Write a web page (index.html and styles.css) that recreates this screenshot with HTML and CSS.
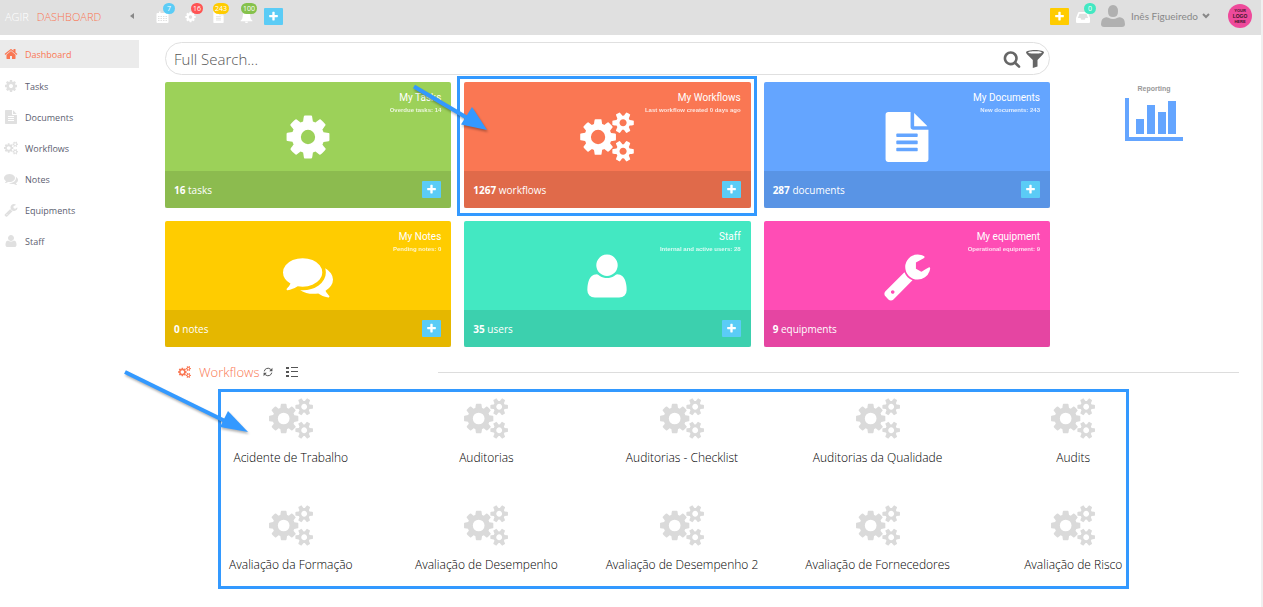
FILE: index.html
```
<!DOCTYPE html>
<html lang="en"><head>
<meta charset="utf-8">
<meta name="viewport" content="width=device-width, initial-scale=1.0">
<title>AGIR Dashboard</title>
<link rel="stylesheet" href="styles.css">
</head>
<body>
<svg class="sprite" aria-hidden="true">
  <symbol id="i-cog" viewBox="0 0 1792 1792"><path d="M1152 896q0-106-75-181t-181-75-181 75-75 181 75 181 181 75 181-75 75-181zm512-109v222q0 12-8 23t-20 13l-185 28q-19 54-39 91 35 50 107 138 10 12 10 25t-9 23q-27 37-99 108t-94 71q-12 0-26-9l-138-108q-44 23-91 38-16 136-29 186-7 28-36 28h-222q-14 0-24.500-8.500t-11.500-21.500l-28-184q-49-16-90-37l-141 107q-10 9-25 9-14 0-25-11-126-114-165-168-7-10-7-23 0-12 8-23 15-21 51-66.500t54-70.500q-27-50-41-99l-183-27q-13-2-21-12.500t-8-23.500v-222q0-12 8-23t19-13l186-28q14-46 39-92-40-57-107-138-10-12-10-24 0-10 9-23 26-36 98.500-107.500t94.500-71.500q13 0 26 10l138 107q44-23 91-38 16-136 29-186 7-28 36-28h222q14 0 24.500 8.500t11.500 21.500l28 184q49 16 90 37l142-107q9-9 24-9 13 0 25 10 129 119 165 170 7 8 7 22 0 12-8 23-15 21-51 66.500t-54 70.500q26 50 41 98l183 28q13 2 21 12.500t8 23.500z"/></symbol>
  <symbol id="i-cogs" viewBox="-64 0 1920 1792"><path d="M832 896q0-106-75-181t-181-75-181 75-75 181 75 181 181 75 181-75 75-181zm768 512q0-52-38-90t-90-38-90 38-38 90q0 53 37.500 90.500t90.500 37.500 90.500-37.500 37.500-90.500zm0-1024q0-52-38-90t-90-38-90 38-38 90q0 53 37.500 90.500t90.500 37.500 90.500-37.500 37.500-90.500zm-384 421v185q0 10-7 19.500t-16 10.500l-155 24q-11 35-32 76 34 48 90 115 7 11 7 20 0 12-7 19-23 30-82.500 89.500t-78.500 59.500q-11 0-21-7l-115-90q-37 19-77 31-11 108-23 155-7 24-30 24h-186q-11 0-20-7.500t-10-17.500l-23-153q-34-10-75-31l-118 89q-7 7-20 7-11 0-21-8-144-133-144-160 0-9 7-19 10-14 41-53t47-61q-23-44-35-82l-152-24q-10-1-17-9.500t-7-19.500v-185q0-10 7-19.500t16-10.500l155-24q11-35 32-76-34-48-90-115-7-11-7-20 0-12 7-20 22-30 82-89t79-59q11 0 21 7l115 90q34-18 77-32 11-108 23-154 7-24 30-24h186q11 0 20 7.500t10 17.500l23 153q34 10 75 31l118-89q8-7 20-7 11 0 21 8 144 133 144 160 0 8-7 19-12 16-42 54t-45 60q23 48 34 82l152 23q10 2 17 10.500t7 19.500zm640 533v140q0 16-149 31-12 27-30 52 51 113 51 138 0 4-4 7-122 71-124 71-8 0-46-47t-52-68q-20 2-30 2t-30-2q-14 21-52 68t-46 47q-2 0-124-71-4-3-4-7 0-25 51-138-18-25-30-52-149-15-149-31v-140q0-16 149-31 13-29 30-52-51-113-51-138 0-4 4-7 4-2 35-20t59-34 30-16q8 0 46 46.500t52 67.500q20-2 30-2t30 2q51-71 92-112l6-2q4 0 124 70 4 3 4 7 0 25-51 138 17 23 30 52 149 15 149 31zm0-1024v140q0 16-149 31-12 27-30 52 51 113 51 138 0 4-4 7-122 71-124 71-8 0-46-47t-52-68q-20 2-30 2t-30-2q-14 21-52 68t-46 47q-2 0-124-71-4-3-4-7 0-25 51-138-18-25-30-52-149-15-149-31v-140q0-16 149-31 13-29 30-52-51-113-51-138 0-4 4-7 4-2 35-20t59-34 30-16q8 0 46 46.500t52 67.500q20-2 30-2t30 2q51-71 92-112l6-2q4 0 124 70 4 3 4 7 0 25-51 138 17 23 30 52 149 15 149 31z"/></symbol>
  <symbol id="i-file" viewBox="0 0 1792 1792"><path d="M1596 476q14 14 28 36h-472v-472q22 14 36 28zm-476 164h544v1056q0 40-28 68t-68 28h-1344q-40 0-68-28t-28-68v-1600q0-40 28-68t68-28h800v544q0 40 28 68t68 28zm160 736v-64q0-14-9-23t-23-9h-704q-14 0-23 9t-9 23v64q0 14 9 23t23 9h704q14 0 23-9t9-23zm0-256v-64q0-14-9-23t-23-9h-704q-14 0-23 9t-9 23v64q0 14 9 23t23 9h704q14 0 23-9t9-23zm0-256v-64q0-14-9-23t-23-9h-704q-14 0-23 9t-9 23v64q0 14 9 23t23 9h704q14 0 23-9t9-23z"/></symbol>
  <symbol id="i-comments" viewBox="0 0 1792 1792"><path d="M1408 768q0 139-94 257t-256.500 186.500-353.500 68.500q-86 0-176-16-124 88-278 128-36 9-86 16h-3q-11 0-20.500-8t-11.500-21q-1-3-1-6.500t.5-6.500 2-6l2.500-5 3.500-5.500 4-5 4.500-5 4-4.500q5-6 23-25t26-29.500 22.500-29 25-38.500 20.500-44q-124-72-195-177t-71-224q0-139 94-257t256.500-186.500 353.500-68.500 353.500 68.500 256.500 186.500 94 257zm384 256q0 120-71 224.500t-195 176.500q10 24 20.500 44t25 38.500 22.500 29 26 29.500 23 25q1 1 4 4.500t4.500 5 4 5 3.500 5.500l2.500 5 2 6 .5 6.500-1 6.500q-3 14-13 22t-22 7q-50-7-86-16-154-40-278-128-90 16-176 16-271 0-472-132 58 4 88 4 161 0 309-45t264-129q125-92 192-212t67-254q0-77-23-152 129 71 204 178t75 230z"/></symbol>
  <symbol id="i-user" viewBox="0 0 1792 1792"><path d="M1600 1405q0 120-73 189.500t-194 69.500h-874q-121 0-194-69.500t-73-189.500q0-53 3.500-103.500t14-109 26.500-108.500 43-97.500 62-81 85.500-53.500 111.500-20q9 0 42 21.500t74.500 48 108 48 133.500 21.500 133.500-21.500 108-48 74.500-48 42-21.500q61 0 111.500 20t85.500 53.500 62 81 43 97.500 26.500 108.500 14 109 3.500 103.500zm-320-893q0 159-112.500 271.500t-271.500 112.500-271.500-112.500-112.500-271.500 112.500-271.500 271.500-112.500 271.500 112.500 112.500 271.500z"/></symbol>
  <symbol id="i-wrench" viewBox="0 0 1792 1792"><path d="M448 1472q0-26-19-45t-45-19-45 19-19 45 19 45 45 19 45-19 19-45zm644-420l-682 682q-37 37-90 37-52 0-91-37l-106-108q-38-36-38-90 0-53 38-91l681-681q39 98 114.500 173.500t173.500 114.500zm634-435q0 39-23 106-47 134-164.500 217.500t-258.500 83.500q-185 0-316.500-131.500t-131.500-316.500 131.500-316.500 316.500-131.500q58 0 121.500 16.500t107.500 46.500q16 11 16 28t-16 28l-293 169v224l193 107q5-3 79-48.500t135.500-81 70.500-35.500q15 0 23.500 10t8.500 25z"/></symbol>
  <symbol id="i-home" viewBox="0 0 1792 1792"><path d="M1472 992v480q0 26-19 45t-45 19h-384v-384h-256v384h-384q-26 0-45-19t-19-45v-480q0-1 .5-3t.5-3l575-474 575 474q1 2 1 6zm223-69l-62 74q-8 9-21 11h-3q-13 0-21-7l-692-577-692 577q-12 8-24 7-13-2-21-11l-62-74q-8-10-7-23.500t11-21.500l719-599q32-26 76-26t76 26l244 204v-195q0-14 9-23t23-9h192q14 0 23 9t9 23v408l219 182q10 8 11 21.500t-7 23.500z"/></symbol>
  <symbol id="i-plus" viewBox="0 0 1792 1792"><path d="M1600 736v192q0 40-28 68t-68 28h-416v416q0 40-28 68t-68 28h-192q-40 0-68-28t-28-68v-416h-416q-40 0-68-28t-28-68v-192q0-40 28-68t68-28h416v-416q0-40 28-68t68-28h192q40 0 68 28t28 68v416h416q40 0 68 28t28 68z"/></symbol>
  <symbol id="i-search" viewBox="0 0 1792 1792"><path d="M1216 832q0-185-131.500-316.500t-316.500-131.500-316.500 131.500-131.500 316.500 131.500 316.500 316.500 131.500 316.500-131.500 131.500-316.500zm512 832q0 52-38 90t-90 38q-54 0-90-38l-343-342q-179 124-399 124-143 0-273.500-55.500t-225-150-150-225-55.500-273.500 55.500-273.500 150-225 225-150 273.500-55.500 273.500 55.500 225 150 150 225 55.500 273.500q0 220-124 399l343 343q37 37 37 90z"/></symbol>
  <symbol id="i-filter" viewBox="0 0 18 18"><path fill-rule="evenodd" d="M9 0c5 0 9 1 9 2.300 0 .8-.5 1.400-1.200 2.100L11.500 10v6.500L6.800 18v-8L1.200 4.400C.5 3.700 0 3.100 0 2.300 0 1 4 0 9 0zm0 1.200c-3.800 0-6.800.5-6.800 1.200S5.200 3.600 9 3.600s6.800-.5 6.800-1.200S12.800 1.200 9 1.200z"/></symbol>
  <symbol id="i-calendar" viewBox="0 0 12 12"><path fill-rule="evenodd" d="M1 2h1.500V.5h1.500V2h4V.500h1.500V2H11q1 0 1 1v8q0 1-1 1H1q-1 0-1-1V3q0-1 1-1zM1.500 5v1h1.500V5zM4 5v1h1.500V5zM6.500 5v1H8V5zM9 5v1h1.500V5zM1.500 7v1h1.500V7zM4 7v1h1.500V7zM6.500 7v1H8V7zM9 7v1h1.500V7zM1.500 9v1h1.500V9zM4 9v1h1.500V9zM6.500 9v1H8V9zM9 9v1h1.500V9z"/></symbol>
  <symbol id="i-bell" viewBox="0 0 12 12"><path d="M6 0q.8 0 .8 1Q9.700 1.700 9.700 5q0 3 2.300 4.700 0 .6-.6.600H.6q-.6 0-.6-.6Q2.300 8 2.300 5q0-3.300 2.900-4 0-1 .8-1zM4.400 10.700h3.200Q7.500 12 6 12t-1.600-1.300z"/></symbol>
  <symbol id="i-inbox" viewBox="0 0 14 12"><path fill-rule="evenodd" d="M3 1h8q.6 0 .8.6L14 7v4q0 1-1 1H1q-1 0-1-1V7l2.200-5.400Q2.400 1 3 1zm.5 1.700L1.900 7h2.600l.8 1.700h3.400L9.500 7h2.600l-1.600-4.300z"/></symbol>
  <symbol id="i-refresh" viewBox="0 0 12 12"><path d="M1.500 5.200A4.500 4.500 0 0 1 9 2.700l1.500 1.200M10.500 6.800A4.500 4.500 0 0 1 3 9.300L1.500 8.100" fill="none" stroke="currentColor" stroke-width="1.200"/><path d="M11.300 1v4H7.500zM.7 11V7h3.800z"/></symbol>
  <symbol id="i-list" viewBox="0 0 12 12"><path d="M0 1h3v2H0zM0 5h3v2H0zM0 9h3v2H0zM5 1h7v1H5zM5 5h7v1H5zM5 10h7v1H5z"/></symbol>
</svg>

<header class="topbar">
  <h1 class="brand">AGIR <span>DASHBOARD</span></h1>
  <button class="collapse" aria-label="Collapse menu"></button>
  <nav class="alerts" aria-label="Alerts">
    <button class="alert" aria-label="Calendar"><svg class="icon"><use href="#i-calendar"/></svg><span class="badge blue">7</span></button>
    <button class="alert" aria-label="Tasks"><svg class="icon"><use href="#i-cog"/></svg><span class="badge red">16</span></button>
    <button class="alert" aria-label="Documents"><svg class="icon"><use href="#i-file"/></svg><span class="badge wide yellow">243</span></button>
    <button class="alert" aria-label="Notifications"><svg class="icon"><use href="#i-bell"/></svg><span class="badge wide green">100</span></button>
  </nav>
  <button class="add" aria-label="Add"><svg><use href="#i-plus"/></svg></button>
  <div class="account">
    <button class="add add-yellow" aria-label="Add message"><svg><use href="#i-plus"/></svg></button>
    <button class="alert inbox" aria-label="Inbox"><svg class="icon"><use href="#i-inbox"/></svg><span class="badge teal">0</span></button>
    <button class="user">
      <svg class="avatar" viewBox="0 0 24 22"><path d="M7 6.500Q7 0 12 0t5 6.500Q17 12 12 12T7 6.500zM0 19q0-6 5-6.800 1.500-.2 2.500.5 4.500 2.500 9 0 1-.7 2.500-.5 5 .8 5 6.800 0 3-3 3H3q-3 0-3-3z"/></svg>
      <span>Inês Figueiredo</span>
      <svg class="chevron" viewBox="0 0 8 6"><path d="M1 1l3 3 3-3"/></svg>
    </button>
    <svg class="logo" viewBox="0 0 24 24"><circle cx="12" cy="12" r="12"/><text x="12" y="8">YOUR</text><text class="logo-mid" x="12" y="14">LOGO</text><text x="12" y="19">HERE</text></svg>
  </div>
</header>

<div class="page">
  <nav class="sidebar" aria-label="Main">
    <a class="active" href="#dashboard"><svg><use href="#i-home"/></svg>Dashboard</a>
    <a href="#tasks"><svg><use href="#i-cog"/></svg>Tasks</a>
    <a href="#documents"><svg><use href="#i-file"/></svg>Documents</a>
    <a href="#workflows"><svg><use href="#i-cogs"/></svg>Workflows</a>
    <a href="#notes"><svg><use href="#i-comments"/></svg>Notes</a>
    <a href="#equipments"><svg><use href="#i-wrench"/></svg>Equipments</a>
    <a href="#staff"><svg><use href="#i-user"/></svg>Staff</a>
  </nav>

  <main>
    <div class="overview">
      <div>
        <form class="search">
          <input type="text" placeholder="Full Search..." aria-label="Full Search">
          <button type="button" aria-label="Search"><svg><use href="#i-search"/></svg></button>
          <button type="button" aria-label="Filter"><svg><use href="#i-filter"/></svg></button>
        </form>
        <div class="cards">
          <section class="card tasks">
            <div class="card-body">
              <svg><use href="#i-cog"/></svg>
              <div class="card-text"><h2>My Tasks</h2><p>Overdue tasks: 14</p></div>
            </div>
            <footer><span><b>16</b> tasks</span><button class="add" aria-label="Add task"><svg><use href="#i-plus"/></svg></button></footer>
          </section>
          <section class="card workflows">
            <div class="card-body">
              <svg><use href="#i-cogs"/></svg>
              <div class="card-text"><h2>My Workflows</h2><p>Last workflow created 0 days ago</p></div>
            </div>
            <footer><span><b>1267</b> workflows</span><button class="add" aria-label="Add workflow"><svg><use href="#i-plus"/></svg></button></footer>
            <div class="highlight">
              <svg class="arrow arrow-card" viewBox="0 0 80 50"><path d="M3 3.500L58 36" stroke-width="4"/><path class="head" d="M76 47L50 41.500 61 24z"/></svg>
            </div>
          </section>
          <section class="card documents">
            <div class="card-body">
              <svg><use href="#i-file"/></svg>
              <div class="card-text"><h2>My Documents</h2><p>New documents: 243</p></div>
            </div>
            <footer><span><b>287</b> documents</span><button class="add" aria-label="Add document"><svg><use href="#i-plus"/></svg></button></footer>
          </section>
          <section class="card notes">
            <div class="card-body">
              <svg><use href="#i-comments"/></svg>
              <div class="card-text"><h2>My Notes</h2><p>Pending notes: 0</p></div>
            </div>
            <footer><span><b>0</b> notes</span><button class="add" aria-label="Add note"><svg><use href="#i-plus"/></svg></button></footer>
          </section>
          <section class="card staff">
            <div class="card-body">
              <svg><use href="#i-user"/></svg>
              <div class="card-text"><h2>Staff</h2><p>Internal and active users: 28</p></div>
            </div>
            <footer><span><b>35</b> users</span><button class="add" aria-label="Add user"><svg><use href="#i-plus"/></svg></button></footer>
          </section>
          <section class="card equipment">
            <div class="card-body">
              <svg><use href="#i-wrench"/></svg>
              <div class="card-text"><h2>My equipment</h2><p>Operational equipment: 9</p></div>
            </div>
            <footer><span><b>9</b> equipments</span></footer>
          </section>
        </div>
      </div>
      <a class="reporting" href="#reporting">
        Reporting
        <svg viewBox="0 0 58 44"><path d="M0 1h4v39h54v4H0zM11 22h8v15h-8zM22 8h8v29h-8zM33 15h8v22h-8zM43 4h8v33h-8z"/></svg>
      </a>
    </div>

    <div class="section-head">
      <svg class="section-icon"><use href="#i-cogs"/></svg>
      <h2>Workflows</h2>
      <button aria-label="Refresh"><svg><use href="#i-refresh"/></svg></button>
      <button aria-label="List view"><svg><use href="#i-list"/></svg></button>
      <hr>
    </div>

    <div class="flows">
      <a href="#f1"><svg><use href="#i-cogs"/></svg>Acidente de Trabalho</a>
      <a href="#f2"><svg><use href="#i-cogs"/></svg>Auditorias</a>
      <a href="#f3"><svg><use href="#i-cogs"/></svg>Auditorias - Checklist</a>
      <a href="#f4"><svg><use href="#i-cogs"/></svg>Auditorias da Qualidade</a>
      <a href="#f5"><svg><use href="#i-cogs"/></svg>Audits</a>
      <a href="#f6"><svg><use href="#i-cogs"/></svg>Avaliação da Formação</a>
      <a href="#f7"><svg><use href="#i-cogs"/></svg>Avaliação de Desempenho</a>
      <a href="#f8"><svg><use href="#i-cogs"/></svg>Avaliação de Desempenho 2</a>
      <a href="#f9"><svg><use href="#i-cogs"/></svg>Avaliação de Fornecedores</a>
      <a href="#f10"><svg><use href="#i-cogs"/></svg>Avaliação de Risco</a>
      <div class="highlight">
        <svg class="arrow arrow-flows" viewBox="0 0 126 64"><path d="M2 2L106 53" stroke-width="4"/><path class="head" d="M125 62L97 57 105 41z"/></svg>
      </div>
    </div>
  </main>
</div>
</body>
</html>
```
FILE: styles.css
```
* {box-sizing: border-box;}
body {
  margin: 0;
  min-height: 100vh;
  background: #fff;
  border-right: 2px solid #f0f0f0;
  font-family: "Open Sans", "Noto Sans", sans-serif;
  font-size: 10px;
  color: #000;
}
h1, h2, p {margin: 0;}
a {color: inherit; text-decoration: none;}
svg {display: block; fill: currentColor;}
button {
  padding: 0;
  border: 0;
  background: none;
  color: inherit;
  font: inherit;
  cursor: pointer;
}
.sprite {position: absolute; width: 0; height: 0;}

/* top bar */
.topbar {
  display: flex;
  align-items: center;
  height: 35px;
  padding: 0 9px 3px 5px;
  background: #e0e0e0;
}
.brand {
  width: 125px;
  font-size: 11px;
  font-weight: 300;
  color: #fff;
}
.brand span {margin-left: 5px; color: #fa7753;}
.collapse {
  border: 3px solid transparent;
  border-right: 4px solid #888;
  border-left: 0;
  margin-right: 14px;
}
.alerts {display: flex;}
.alert {position: relative; width: 28px; height: 20px; color: #fff;}
.alert .icon {width: 13px; height: 12px; margin: 2px auto 0;}
.badge {
  position: absolute;
  left: 15px;
  top: -3px;
  min-width: 12px;
  height: 11px;
  padding: 0 2px;
  border-radius: 6px;
  font-size: 7px;
  line-height: 11px;
}
.wide {left: 9px;}
.blue {background: #5bccf6;}
.red {background: #ff5454;}
.yellow {background: #ffcc00;}
.green {background: #85c14b;}
.teal {background: #43e8c2;}
.add {
  display: flex;
  align-items: center;
  justify-content: center;
  width: 19px;
  height: 17px;
  border-radius: 1px;
  background: #5bccf6;
  color: #fff;
}
.add svg {width: 11px; height: 11px;}
.topbar > .add {margin-left: 4px;}
.account {display: flex; align-items: center; margin-left: auto;}
.add-yellow {background: #ffcc00;}
.inbox .icon {width: 14px;}
.user {
  display: flex;
  align-items: center;
  margin: 0 18px 0 4px;
  font-family: Lato, sans-serif;
  font-size: 10px;
  color: #888;
}
.avatar {width: 24px; height: 22px; margin-right: 6px; fill: #b0b0b0;}
.chevron {
  width: 8px;
  height: 6px;
  margin-left: 4px;
  fill: none;
  stroke: #888;
  stroke-width: 2px;
}
.logo {width: 24px; height: 24px; fill: #ee4a9b;}
.logo text {
  fill: #3b1428;
  font-family: "Liberation Sans", sans-serif;
  font-size: 4px;
  font-weight: bold;
  text-anchor: middle;
}
.logo .logo-mid {font-size: 5px;}

/* side menu */
.page {display: flex;}
.sidebar {
  display: flex;
  flex-direction: column;
  gap: 3px;
  width: 139px;
  padding-top: 5px;
  font-size: 9px;
  color: #5c6070;
}
.sidebar a {
  display: flex;
  align-items: center;
  gap: 7px;
  height: 28px;
  padding-left: 4px;
}
.sidebar svg {width: 14px; height: 14px; color: #e0e0e0;}
.sidebar .active {margin-bottom: 1px; background: #ebebeb; color: #fa7753;}
.sidebar .active svg {color: #fa7753;}

main {flex: 1; min-width: 0; padding: 7px 22px 0 26px;}
.overview {
  display: grid;
  grid-template-columns: minmax(0, 1fr) 170px;
  gap: 19px;
}
.search {
  display: flex;
  align-items: center;
  gap: 5px;
  height: 33px;
  margin-bottom: 7px;
  padding: 0 5px 0 8px;
  border: 1px solid #e0e0e0;
  border-radius: 17px;
  color: #666;
}
.search input {
  flex: 1;
  min-width: 0;
  padding: 0;
  border: 0;
  outline: 0;
  background: none;
  font-family: inherit;
  font-size: 15px;
  font-weight: 300;
}
.search input::placeholder {color: #555;}
.search svg {width: 18px; height: 18px;}

/* cards */
.cards {
  display: grid;
  grid-template-columns: repeat(3, minmax(0, 1fr));
  gap: 13px;
}
.card {position: relative; border-radius: 2px; color: #fff;}
.card-body {display: grid; height: 89px;}
.card-body > * {grid-area: 1 / 1;}
.card-body > svg {width: 54px; height: 50px; margin-top: 30px; justify-self: center;}
.card-text {
  padding: 10px 10px 0;
  font-family: "Liberation Sans", sans-serif;
  text-align: right;
}
.card h2 {
  font-family: Roboto, sans-serif;
  font-size: 10px;
  line-height: 12px;
  font-weight: normal;
}
.card p {font-size: 6px; line-height: 12px; font-weight: bold; opacity: .8;}
.card footer {
  display: flex;
  align-items: center;
  justify-content: space-between;
  height: 37px;
  padding: 0 10px 0 9px;
  background: rgba(0, 0, 0, .1);
}
.tasks {background: #9cd159;}
.workflows {background: #fa7753;}
.documents {background: #64a5ff;}
.notes {background: #ffcc00;}
.staff {background: #43e8c2;}
.equipment {background: #ff4db5;}

.reporting {
  padding-top: 42px;
  font-family: "Liberation Sans", sans-serif;
  font-size: 7px;
  line-height: 10px;
  font-weight: bold;
  text-align: center;
  color: #999;
}
.reporting svg {width: 58px; height: 44px; margin: 3px auto 0; fill: #64a5ff;}

/* workflow list */
.section-head {
  display: flex;
  align-items: center;
  height: 42px;
  padding: 8px 0 0 13px;
  color: #555;
}
.section-icon {width: 13px; height: 12px; margin-right: 8px; fill: #fa7753;}
.section-head h2 {font-size: 13px; font-weight: 300; color: #fa7753;}
.section-head button {margin-left: 3px;}
.section-head button svg {width: 10px; height: 10px;}
.section-head button + button {margin-left: 13px;}
.section-head button + button svg {width: 12px; height: 12px;}
.section-head hr {
  flex: 0 1 801px;
  margin: 0 0 0 auto;
  border: 0;
  border-top: 1px solid #ddd;
}
.flows {
  position: relative;
  display: grid;
  grid-template-columns: repeat(5, minmax(0, 1fr));
  row-gap: 38px;
  margin: 0 68px 0 28px;
  padding: 9px 0 15px;
  font-size: 12px;
  line-height: 18px;
  font-weight: 300;
  text-align: center;
}
.flows svg {color: #dadada;}
.flows a svg {width: 44px; height: 41px; margin: 0 auto 10px;}

/* markers over the page */
.highlight {
  position: absolute;
  inset: -6px -6px -8px -7px;
  border: 3px solid #3399ff;
  pointer-events: none;
}
.flows .highlight {inset: 0 42px 0 25px;}
.arrow {
  position: absolute;
  overflow: visible;
  filter: drop-shadow(1px 2px 1px rgba(0, 0, 0, .3));
}
.arrow path {fill: none; stroke: #3399ff;}
.arrow .head {fill: #3399ff; stroke: none;}
.arrow-card {left: -49px; top: 4px; width: 80px; height: 50px;}
.arrow-flows {left: -98px; top: -22px; width: 126px; height: 64px;}
```
